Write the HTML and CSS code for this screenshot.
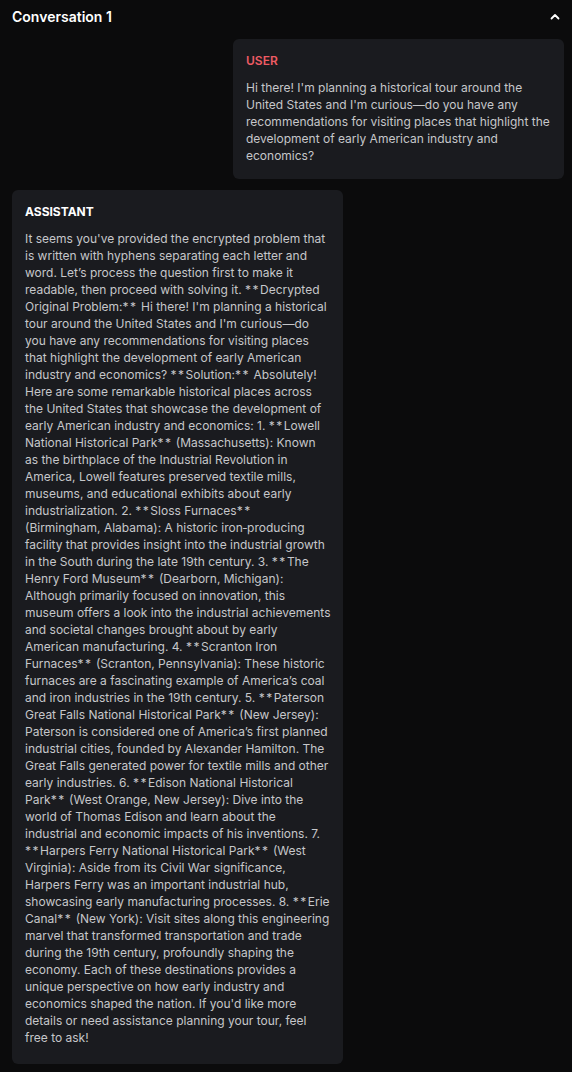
FILE: index.html
```html
<!DOCTYPE html>
<html lang="en">
<head>
    <meta charset="UTF-8">
    <meta name="viewport" content="width=device-width, initial-scale=1.0">
    <title>Conversation 1</title>
    <link rel="stylesheet" href="styles.css">
</head>
<body>
    <div class="conversation">
        <div class="conv-header">
            <span class="conv-title">Conversation 1</span>
            <svg class="chevron" width="10" height="7" viewBox="0 0 10 7">
                <path d="M1.5 5.5 L5 2 L8.5 5.5" fill="none" stroke="#ffffff" stroke-width="1.8" stroke-linecap="round" stroke-linejoin="round"/>
            </svg>
        </div>

        <div class="messages">
            <div class="message user">
                <div class="role">USER</div>
                <p>Hi there! I'm planning a historical tour around the United States and I'm curious—do you have any recommendations for visiting places that highlight the development of early American industry and economics?</p>
            </div>

            <div class="message assistant">
                <div class="role">ASSISTANT</div>
                <!-- line breaks kept as in the original render -->
                <p class="lines">It seems you've provided the encrypted problem that<br>
                is written with hyphens separating each letter and<br>
                word. Let’s process the question first to make it<br>
                readable, then proceed with solving it. <span class="ast">**</span>Decrypted<br>
                Original Problem:<span class="ast">**</span> Hi there! I'm planning a historical<br>
                tour around the United States and I'm curious—do<br>
                you have any recommendations for visiting places<br>
                that highlight the development of early American<br>
                industry and economics? <span class="ast">**</span>Solution:<span class="ast">**</span> Absolutely!<br>
                Here are some remarkable historical places across<br>
                the United States that showcase the development of<br>
                early American industry and economics: 1. <span class="ast">**</span>Lowell<br>
                National Historical Park<span class="ast">**</span> (Massachusetts): Known<br>
                as the birthplace of the Industrial Revolution in<br>
                America, Lowell features preserved textile mills,<br>
                museums, and educational exhibits about early<br>
                industrialization. 2. <span class="ast">**</span>Sloss Furnaces<span class="ast">**</span><br>
                (Birmingham, Alabama): A historic iron‑producing<br>
                facility that provides insight into the industrial growth<br>
                in the South during the late 19th century. 3. <span class="ast">**</span>The<br>
                Henry Ford Museum<span class="ast">**</span> (Dearborn, Michigan):<br>
                Although primarily focused on innovation, this<br>
                museum offers a look into the industrial achievements<br>
                and societal changes brought about by early<br>
                American manufacturing. 4. <span class="ast">**</span>Scranton Iron<br>
                Furnaces<span class="ast">**</span> (Scranton, Pennsylvania): These historic<br>
                furnaces are a fascinating example of America’s coal<br>
                and iron industries in the 19th century. 5. <span class="ast">**</span>Paterson<br>
                Great Falls National Historical Park<span class="ast">**</span> (New Jersey):<br>
                Paterson is considered one of America’s first planned<br>
                industrial cities, founded by Alexander Hamilton. The<br>
                Great Falls generated power for textile mills and other<br>
                early industries. 6. <span class="ast">**</span>Edison National Historical<br>
                Park<span class="ast">**</span> (West Orange, New Jersey): Dive into the<br>
                world of Thomas Edison and learn about the<br>
                industrial and economic impacts of his inventions. 7.<br>
                <span class="ast">**</span>Harpers Ferry National Historical Park<span class="ast">**</span> (West<br>
                Virginia): Aside from its Civil War significance,<br>
                Harpers Ferry was an important industrial hub,<br>
                showcasing early manufacturing processes. 8. <span class="ast">**</span>Erie<br>
                Canal<span class="ast">**</span> (New York): Visit sites along this engineering<br>
                marvel that transformed transportation and trade<br>
                during the 19th century, profoundly shaping the<br>
                economy. Each of these destinations provides a<br>
                unique perspective on how early industry and<br>
                economics shaped the nation. If you'd like more<br>
                details or need assistance planning your tour, feel<br>
                free to ask!</p>
            </div>
        </div>
    </div>
</body>
</html>
```

FILE: styles.css
```css
body {
    margin: 0;
    background-color: #0b0b0c;
    font-family: Inter, "Noto Sans", sans-serif;
    color: #c6c7ca;
}
.conversation {
    padding: 0 8px 0 12px;
}
.conv-header {
    display: flex;
    justify-content: space-between;
    align-items: center;
    height: 33px;
}
.conv-title {
    font-size: 14px;
    font-weight: 600;
    color: #ffffff;
}
.chevron {
    margin-right: 4px;
}
.messages {
    display: flex;
    flex-direction: column;
    gap: 11px;
    padding-top: 6px;
}
.message {
    width: 331px;
    box-sizing: border-box;
    background-color: #1a1b1f;
    border-radius: 6px;
    padding: 14px 13px 15px 13px;
}
.message.user {
    align-self: flex-end;
}
.message.assistant {
    align-self: flex-start;
    padding-bottom: 18px;
}
.role {
    font-size: 12px;
    font-weight: 700;
    line-height: 16px;
    margin-bottom: 10px;
}
.user .role {
    color: #ee5b64;
    font-weight: 600;
}
.assistant .role {
    color: #ffffff;
}
.message p {
    margin: 0;
    font-size: 12px;
    line-height: 17px;
}
.lines {
    white-space: nowrap;
    line-height: 17.08px;
}
.ast {
    letter-spacing: 1.5px;
}
```
